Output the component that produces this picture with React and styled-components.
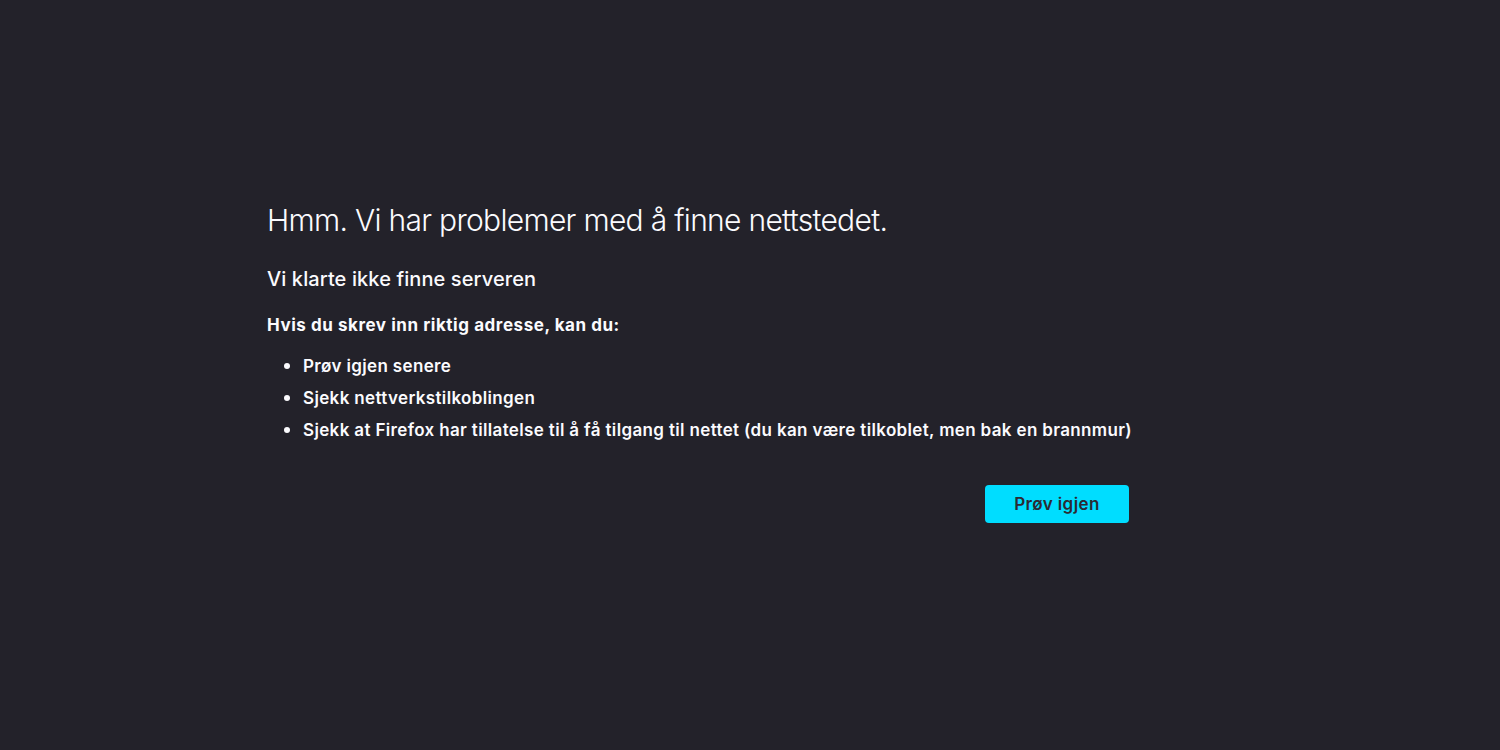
import styled, { createGlobalStyle } from "styled-components";

const GlobalStyle = createGlobalStyle`
  html, body {
    margin: 0;
    padding: 0;
    background: #23222a;
  }
  body {
    font-family: Inter, "Noto Sans", "Liberation Sans", sans-serif;
    color: #fbfbfe;
  }
`;

const Page = styled.div`
  min-height: 750px;
  display: flex;
  justify-content: center;
  align-items: flex-start;
  padding-top: 198px;
  box-sizing: border-box;
`;

const Container = styled.div`
  width: 966px;
  display: flex;
  flex-direction: column;
`;

const Content = styled.div`
  width: 862px;
  display: flex;
  flex-direction: column;
`;

const Title = styled.h1`
  margin: 0;
  font-size: 30px;
  font-weight: 300;
  line-height: 44px;
  letter-spacing: -0.7px;
`;

const SubTitle = styled.h2`
  margin: 23px 0 0;
  font-size: 20px;
  font-weight: 500;
  line-height: 28px;
  letter-spacing: 0.1px;
`;

const Lead = styled.p`
  margin: 20px 0 0;
  font-size: 17px;
  font-weight: 700;
  line-height: 24px;
  letter-spacing: 0.55px;
`;

const List = styled.ul`
  margin: 13px 0 0;
  padding-left: 36px;
  font-size: 17px;
  font-weight: 600;
  line-height: 32px;
  letter-spacing: 0.35px;
`;

const Item = styled.li`
  white-space: nowrap;
  &::marker {
    font-size: 19px;
  }
`;

const Actions = styled.div`
  display: flex;
  justify-content: flex-end;
  margin-top: 39px;
`;

const Button = styled.button`
  width: 144px;
  height: 38px;
  border: none;
  border-radius: 4px;
  background: #00ddff;
  color: #2b2a33;
  font-family: inherit;
  font-size: 17px;
  font-weight: 600;
  letter-spacing: 0.4px;
  cursor: pointer;
`;

export default function App() {
  return (
    <>
      <GlobalStyle />
      <Page>
        <Container>
          <Content>
            <Title>Hmm. Vi har problemer med å finne nettstedet.</Title>
            <SubTitle>Vi klarte ikke finne serveren</SubTitle>
            <Lead>Hvis du skrev inn riktig adresse, kan du:</Lead>
            <List>
              <Item>Prøv igjen senere</Item>
              <Item>Sjekk nettverkstilkoblingen</Item>
              <Item>
                Sjekk at Firefox har tillatelse til å få tilgang til nettet (du
                kan være tilkoblet, men bak en brannmur)
              </Item>
            </List>
            <Actions>
              <Button type="button">Prøv igjen</Button>
            </Actions>
          </Content>
        </Container>
      </Page>
    </>
  );
}
